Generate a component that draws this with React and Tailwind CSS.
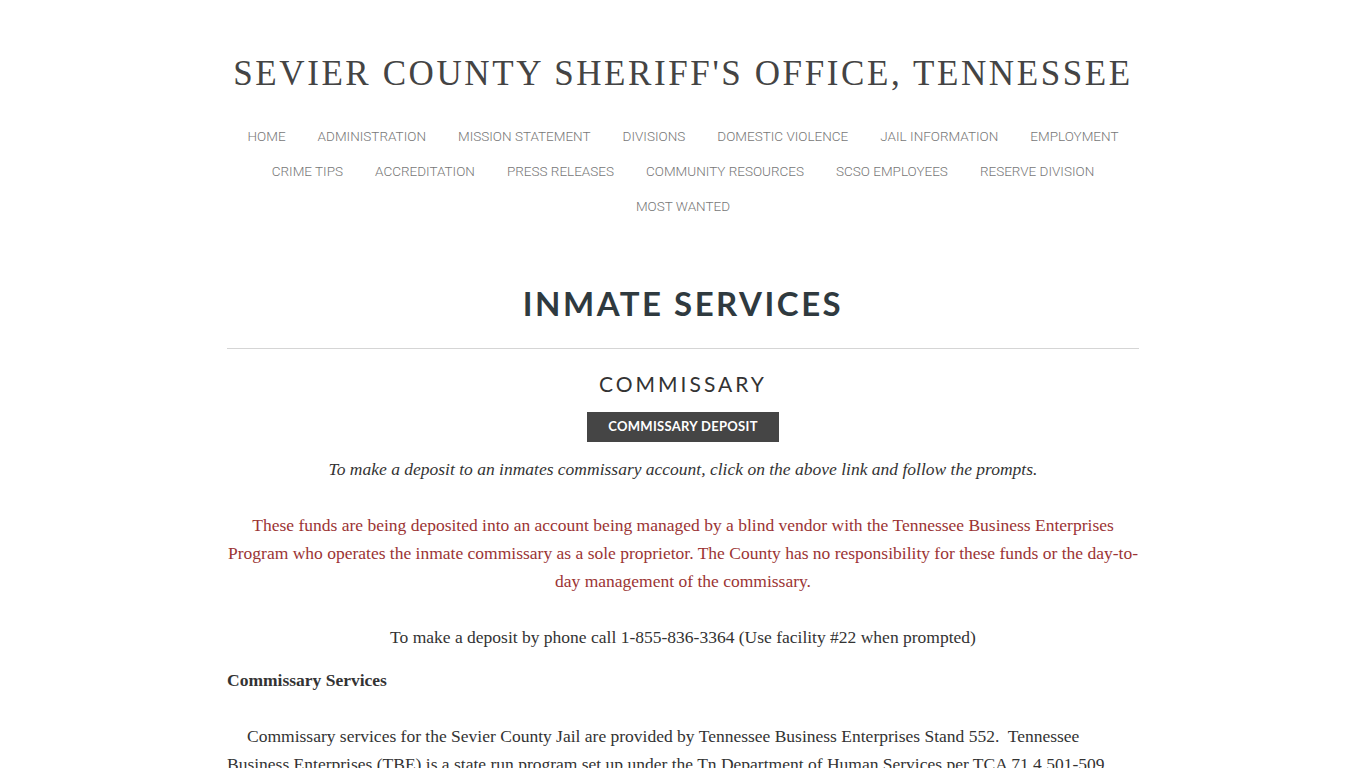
import React from "react";

const navRows = [
  ["HOME", "ADMINISTRATION", "MISSION STATEMENT", "DIVISIONS", "DOMESTIC VIOLENCE", "JAIL INFORMATION", "EMPLOYMENT"],
  ["CRIME TIPS", "ACCREDITATION", "PRESS RELEASES", "COMMUNITY RESOURCES", "SCSO EMPLOYEES", "RESERVE DIVISION"],
  ["MOST WANTED"],
];

const serif = "font-['Liberation_Serif','DejaVu_Serif',serif]";

const App = () => {
  return (
    <div className="min-h-screen bg-white">
      <div className="mx-auto w-[912px] pt-[52px]">
        {/* site title */}
        <h1 className={`${serif} whitespace-nowrap text-center text-[35px] leading-[44px] tracking-[2.6px] text-[#444]`}>
          SEVIER COUNTY SHERIFF'S OFFICE, TENNESSEE
        </h1>

        {/* navigation */}
        <nav className="mt-[23px] font-['Roboto',sans-serif] font-light text-[13.5px] text-[#777]">
          {navRows.map((row, i) => (
            <div key={i} className="flex justify-center gap-x-[32px] h-[35px] items-center whitespace-nowrap">
              {row.map((item) => (
                <a key={item} href="#" className="hover:text-[#333]">
                  {item}
                </a>
              ))}
            </div>
          ))}
        </nav>

        {/* page heading */}
        <h2 className="mt-[59px] text-center font-['Lato',sans-serif] font-bold text-[33px] leading-[40px] tracking-[2.5px] text-[#2f3a3f]">
          INMATE SERVICES
        </h2>
        <hr className="mt-[25px] border-t border-[#d5d5d5]" />

        <h3 className="mt-[21px] text-center font-['Lato',sans-serif] text-[21px] leading-[28px] tracking-[3px] text-[#333]">
          COMMISSARY
        </h3>
        <div className="mt-[14px] flex justify-center">
          <a
            href="#"
            className="w-[192px] h-[30px] flex items-center justify-center bg-[#454545] text-white font-['Lato',sans-serif] font-bold text-[13px] tracking-[0.3px]"
          >
            COMMISSARY DEPOSIT
          </a>
        </div>

        {/* body */}
        <div className={`${serif} text-[17.5px] leading-[28px] text-[#333] mt-[13px]`}>
          <p className="text-center italic">
            To make a deposit to an inmates commissary account, click on the above link and follow the prompts.
          </p>
          <p className="mt-[28px] text-center text-[#9b3434]">
            These funds are being deposited into an account being managed by a blind vendor with the Tennessee Business Enterprises Program who operates the inmate commissary as a sole proprietor. The County has no responsibility for these funds or the day-to-day management of the commissary.
          </p>
          <p className="mt-[28px] text-center">
            To make a deposit by phone call 1-855-836-3364 (Use facility #22 when prompted)
          </p>
          <p className="mt-[15px] font-bold">Commissary Services</p>
          <p className="mt-[28px] indent-[20px]">
            Commissary services for the Sevier County Jail are provided by Tennessee Business Enterprises Stand 552.&nbsp; Tennessee Business Enterprises (TBE) is a state run program set up under the Tn Department of Human Services per TCA 71.4.501-509.
          </p>
        </div>
      </div>
    </div>
  );
};

export default App;
